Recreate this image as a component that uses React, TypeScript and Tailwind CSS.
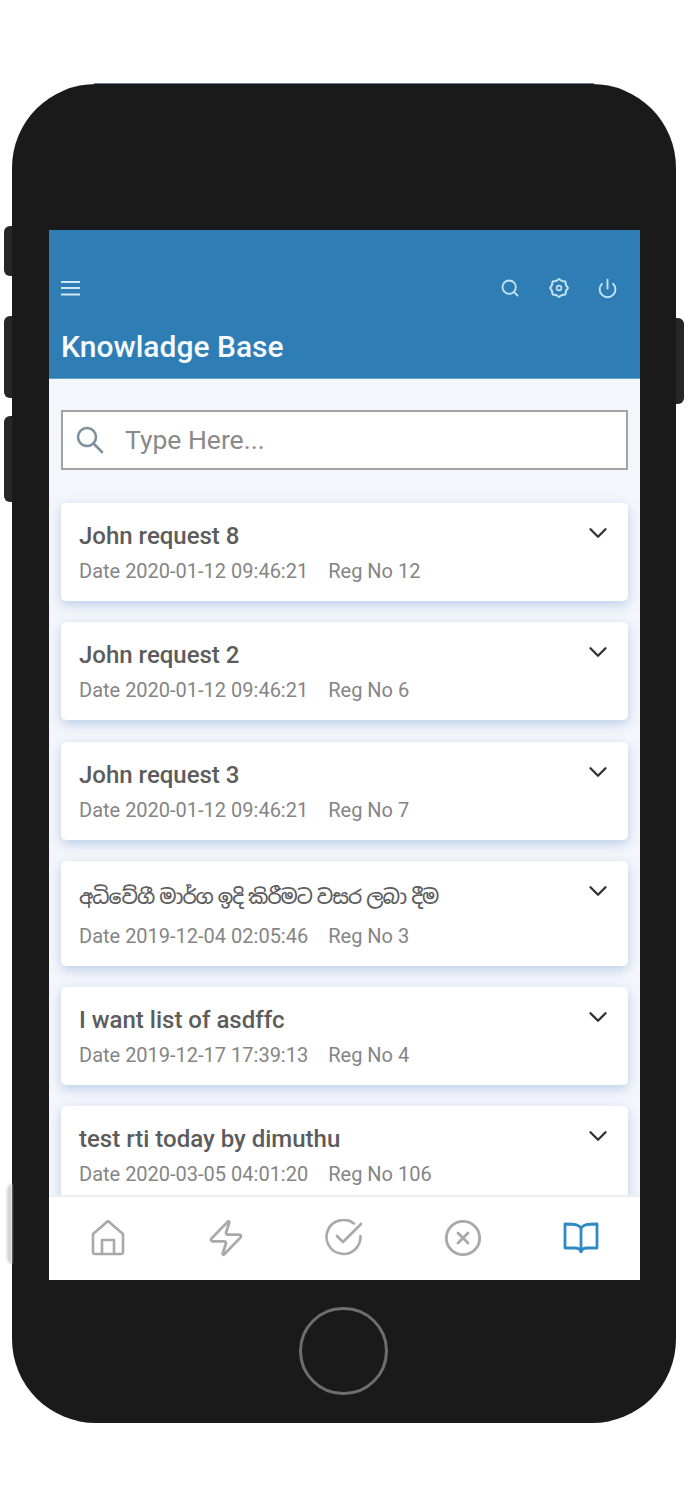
import { ChevronDown, CircleX, Power, Search, Zap } from "lucide-react"

const requests = [
  { title: "John request 8", date: "2020-01-12 09:46:21", reg: "12" },
  { title: "John request 2", date: "2020-01-12 09:46:21", reg: "6" },
  { title: "John request 3", date: "2020-01-12 09:46:21", reg: "7" },
  { title: "අධිවේගී මාර්ග ඉදි කිරීමට වසර ලබා දීම", date: "2019-12-04 02:05:46", reg: "3", sinhala: true },
  { title: "I want list of asdffc", date: "2019-12-17 17:39:13", reg: "4" },
  { title: "test rti today by dimuthu", date: "2020-03-05 04:01:20", reg: "106" },
]

function MenuIcon() {
  return (
    <svg width="20" height="16" viewBox="0 0 20 16" fill="none" stroke="#cfe8f4" strokeWidth="2">
      <path d="M0 2 H19 M0 8 H19 M0 14.5 H19" />
    </svg>
  )
}

function GearIcon() {
  return (
    <svg width="20" height="20" viewBox="0 0 20 20" fill="none" stroke="#c4e3f1" strokeWidth="2" strokeLinejoin="round">
      <path d="M10 1 L12.9 3 L16.4 3.6 L17 7.1 L19 10 L17 12.9 L16.4 16.4 L12.9 17 L10 19 L7.1 17 L3.6 16.4 L3 12.9 L1 10 L3 7.1 L3.6 3.6 L7.1 3 Z" />
      <circle cx="10" cy="10" r="2.4" strokeWidth="1.6" />
    </svg>
  )
}

function FieldSearchIcon() {
  return (
    <svg width="28" height="28" viewBox="0 0 28 28" fill="none" stroke="#7d909e" strokeWidth="2.6" strokeLinecap="round">
      <circle cx="11" cy="11" r="9" />
      <path d="M17.5 17.5 L26 26" />
    </svg>
  )
}

function HomeIcon() {
  return (
    <svg width="36" height="38" viewBox="0 0 36 38" fill="none" stroke="#a9a9a9" strokeWidth="2.6" strokeLinejoin="round">
      <path d="M18 2 L33 15 V33 a2 2 0 0 1 -2 2 H5 a2 2 0 0 1 -2 -2 V15 Z" />
      <path d="M12 35 V21 H24 V35" />
    </svg>
  )
}

function CheckIcon() {
  return (
    <svg width="38" height="38" viewBox="0 0 38 38" fill="none" stroke="#a9a9a9" strokeWidth="2.6" strokeLinecap="round" strokeLinejoin="round">
      <path d="M29 4.5 A17 17 0 1 0 35.5 17" />
      <path d="M12 17 L18 23 L36 5" />
    </svg>
  )
}

function BookIcon() {
  return (
    <svg width="36" height="32" viewBox="0 0 36 32" fill="none" stroke="#2f8ac4" strokeWidth="2.8" strokeLinejoin="round">
      <path d="M18 6 C16 3 13 2 2 2 V26 H12 C15 26 17 27 18 29 C19 27 21 26 24 26 H34 V2 C23 2 20 3 18 6 Z" />
      <path d="M18 6 V31" />
    </svg>
  )
}

export default function App() {
  return (
    <div className="w-[693px] h-[1500px] bg-white pt-[84px] pl-3 font-['Roboto',sans-serif]">
      <div className="relative w-[664px] h-[1339px] rounded-[84px] bg-[#1a1a1a] pt-[146px] pl-[37px]">
        {/* Side buttons and frame edges */}
        <div className="absolute left-[82px] right-[82px] -top-px h-px bg-[#6f7f92]" />
        <div className="absolute -left-2 top-[142px] w-2 h-[50px] rounded-l-md bg-[#262626]" />
        <div className="absolute -left-2 top-[232px] w-2 h-[82px] rounded-l-md bg-[#262626]" />
        <div className="absolute -left-2 top-[332px] w-2 h-[86px] rounded-l-md bg-[#262626]" />
        <div className="absolute -left-[5px] top-[1100px] w-[5px] h-[80px] rounded-l-full bg-[#d4d4d4] blur-[1px]" />
        <div className="absolute -right-2 top-[234px] w-2 h-[86px] rounded-r-md bg-[#262626]" />

        <div className="w-[591px] h-[1050px] flex flex-col bg-[#f4f6fb] overflow-hidden">
          {/* Header */}
          <header className="h-[149px] shrink-0 bg-[#2f7db5] px-3 pt-[46px] border-b border-[#5aa5d0]">
            <div className="flex items-center justify-between h-6">
              <MenuIcon />
              <div className="flex items-center gap-[24.5px] pr-[9px]">
                <div className="w-6 flex justify-center"><Search size={20} strokeWidth={2.2} className="text-[#c4e3f1]" /></div>
                <div className="w-6 flex justify-center"><GearIcon /></div>
                <div className="w-6 flex justify-center"><Power size={21} strokeWidth={2.2} className="text-[#c4e3f1]" /></div>
              </div>
            </div>
            <h1 className="mt-[29px] text-[30px] leading-9 font-medium text-[#f4fafd]">Knowladge Base</h1>
          </header>

          {/* List */}
          <main className="flex-1 min-h-0 overflow-hidden px-3 pt-[31px]">
            <div className="h-[60px] flex items-center gap-[21px] bg-white border-2 border-[#a3a3a3] pl-[13px]">
              <FieldSearchIcon />
              <span className="text-[26.5px] text-[#8a8a8a]">Type Here...</span>
            </div>
            <div className="mt-[33px] flex flex-col gap-[21.25px]">
              {requests.map((r) => (
                <div
                  key={r.reg}
                  className="relative rounded-[5px] bg-white pl-[18px] pt-[17px] pb-[17px] shadow-[0_4px_12px_rgba(120,160,210,0.45)]"
                >
                  <div
                    className={
                      r.sinhala
                        ? "text-[20px] leading-[38px] tracking-[-1px] [word-spacing:-4px] font-medium text-[#5c5c5c] font-['Noto_Sans_Sinhala','Noto_Sans',sans-serif]"
                        : "text-[24px] leading-[32px] font-medium text-[#5c5c5c]"
                    }
                  >
                    {r.title}
                  </div>
                  <div className={`flex gap-[20px] text-[20px] leading-[26px] text-[#858585] ${r.sinhala ? "mt-[7px]" : "mt-[6px]"}`}>
                    <span>Date {r.date}</span>
                    <span>Reg No {r.reg}</span>
                  </div>
                  <ChevronDown size={30} strokeWidth={1.9} className="absolute right-[15px] top-[15px] text-[#333]" />
                </div>
              ))}
            </div>
          </main>

          {/* Bottom nav */}
          <nav className="h-[85px] shrink-0 bg-white border-t-2 border-[#eceef3] grid grid-cols-5 items-center pb-[2px]">
            <div className="flex justify-center"><HomeIcon /></div>
            <div className="flex justify-center"><Zap size={40} strokeWidth={1.7} className="text-[#a9a9a9]" /></div>
            <div className="flex justify-center"><CheckIcon /></div>
            <div className="flex justify-center"><CircleX size={40} strokeWidth={1.7} className="text-[#a9a9a9]" /></div>
            <div className="flex justify-center"><BookIcon /></div>
          </nav>
        </div>

        {/* Home button */}
        <div className="mt-[27px] ml-[250px] w-[89px] h-[88px] rounded-full border-[3px] border-[#6e6e6e]" />
      </div>
    </div>
  )
}
